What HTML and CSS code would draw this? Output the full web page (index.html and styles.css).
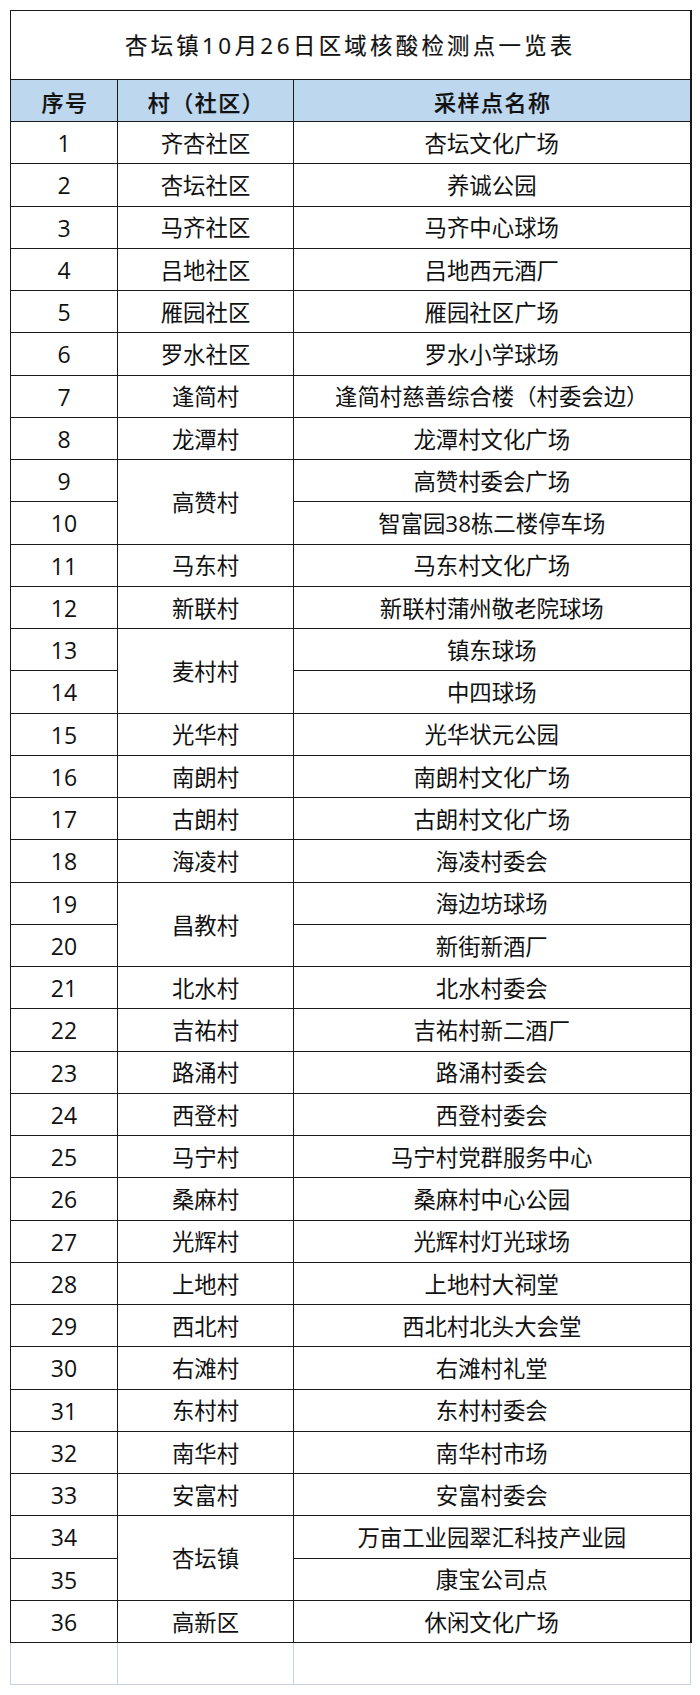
FILE: index.html
```html
<!DOCTYPE html>
<html lang="zh-CN">
<head>
<meta charset="utf-8">
<title>杏坛镇10月26日区域核酸检测点一览表</title>
<link rel="stylesheet" href="styles.css">
</head>
<body>
<div class="sheet">
<table class="list">
  <colgroup>
    <col class="c-no">
    <col class="c-vil">
    <col class="c-site">
  </colgroup>
  <thead>
    <tr class="title-row"><th colspan="3" class="title">杏坛镇<span class="num">10</span>月<span class="num">26</span>日区域核酸检测点一览表</th></tr>
    <tr class="head-row"><th>序号</th><th>村（社区）</th><th class="last">采样点名称</th></tr>
  </thead>
  <tbody>
    <tr><td class="no">1</td><td>齐杏社区</td><td class="last">杏坛文化广场</td></tr>
    <tr><td class="no">2</td><td>杏坛社区</td><td class="last">养诚公园</td></tr>
    <tr><td class="no">3</td><td>马齐社区</td><td class="last">马齐中心球场</td></tr>
    <tr><td class="no">4</td><td>吕地社区</td><td class="last">吕地西元酒厂</td></tr>
    <tr><td class="no">5</td><td>雁园社区</td><td class="last">雁园社区广场</td></tr>
    <tr><td class="no">6</td><td>罗水社区</td><td class="last">罗水小学球场</td></tr>
    <tr><td class="no">7</td><td>逢简村</td><td class="last">逢简村慈善综合楼（村委会边）</td></tr>
    <tr><td class="no">8</td><td>龙潭村</td><td class="last">龙潭村文化广场</td></tr>
    <tr><td class="no">9</td><td rowspan="2">高赞村</td><td class="last">高赞村委会广场</td></tr>
    <tr><td class="no">10</td><td class="last">智富园38栋二楼停车场</td></tr>
    <tr><td class="no">11</td><td>马东村</td><td class="last">马东村文化广场</td></tr>
    <tr><td class="no">12</td><td>新联村</td><td class="last">新联村蒲州敬老院球场</td></tr>
    <tr><td class="no">13</td><td rowspan="2">麦村村</td><td class="last">镇东球场</td></tr>
    <tr><td class="no">14</td><td class="last">中四球场</td></tr>
    <tr><td class="no">15</td><td>光华村</td><td class="last">光华状元公园</td></tr>
    <tr><td class="no">16</td><td>南朗村</td><td class="last">南朗村文化广场</td></tr>
    <tr><td class="no">17</td><td>古朗村</td><td class="last">古朗村文化广场</td></tr>
    <tr><td class="no">18</td><td>海凌村</td><td class="last">海凌村委会</td></tr>
    <tr><td class="no">19</td><td rowspan="2">昌教村</td><td class="last">海边坊球场</td></tr>
    <tr><td class="no">20</td><td class="last">新街新酒厂</td></tr>
    <tr><td class="no">21</td><td>北水村</td><td class="last">北水村委会</td></tr>
    <tr><td class="no">22</td><td>吉祐村</td><td class="last">吉祐村新二酒厂</td></tr>
    <tr><td class="no">23</td><td>路涌村</td><td class="last">路涌村委会</td></tr>
    <tr><td class="no">24</td><td>西登村</td><td class="last">西登村委会</td></tr>
    <tr><td class="no">25</td><td>马宁村</td><td class="last">马宁村党群服务中心</td></tr>
    <tr><td class="no">26</td><td>桑麻村</td><td class="last">桑麻村中心公园</td></tr>
    <tr><td class="no">27</td><td>光辉村</td><td class="last">光辉村灯光球场</td></tr>
    <tr><td class="no">28</td><td>上地村</td><td class="last">上地村大祠堂</td></tr>
    <tr><td class="no">29</td><td>西北村</td><td class="last">西北村北头大会堂</td></tr>
    <tr><td class="no">30</td><td>右滩村</td><td class="last">右滩村礼堂</td></tr>
    <tr><td class="no">31</td><td>东村村</td><td class="last">东村村委会</td></tr>
    <tr><td class="no">32</td><td>南华村</td><td class="last">南华村市场</td></tr>
    <tr><td class="no">33</td><td>安富村</td><td class="last">安富村委会</td></tr>
    <tr><td class="no">34</td><td rowspan="2">杏坛镇</td><td class="last">万亩工业园翠汇科技产业园</td></tr>
    <tr><td class="no">35</td><td class="last">康宝公司点</td></tr>
    <tr><td class="no">36</td><td>高新区</td><td class="last">休闲文化广场</td></tr>
    <tr class="blank-row"><td></td><td></td><td></td></tr>
  </tbody>
</table>
</div>
</body>
</html>
```
FILE: styles.css
```css
html, body {
  margin: 0;
  padding: 0;
  background: #ffffff;
}

.sheet {
  padding: 10px 0 0 10px;
}

.list {
  border-collapse: collapse;
  table-layout: fixed;
  width: 680px;
  font-family: "Open Sans", "Noto Sans CJK SC", sans-serif;
  color: #111111;
}

.c-no { width: 107px; }
.c-vil { width: 176px; }
.c-site { width: 397px; }

.list th,
.list td {
  border: 1px solid #1a1a1a;
  text-align: center;
  vertical-align: middle;
  padding: 3px 0 0 0;
  white-space: nowrap;
  font-size: 22.4px;
  font-weight: normal;
  line-height: 1;
}

.list .last {
  border-right: 2px solid #1a1a1a;
}

.title-row {
  height: 69px;
}

.title {
  font-size: 24px;
  letter-spacing: 3.3px;
  padding: 7px 0 0 3px;
  border-right: 2px solid #1a1a1a !important;
  color: #111111;
  -webkit-text-stroke: 0.2px #111111;
}

.title .num {
  letter-spacing: 3.5px;
}

.head-row {
  height: 42px;
}

.head-row th {
  background: #bdd7ee;
  font-weight: 500;
  letter-spacing: 1.5px;
  padding-left: 2px;
  font-size: 22px;
  -webkit-text-stroke: 0.25px #111111;
}

.list tbody tr {
  height: 42.25px;
}

.list td.no {
  font-size: 23px;
  padding-top: 2px;
}

.list .blank-row {
  height: 42px;
}

.list .blank-row td {
  border: 1px solid #c9d3e6;
  border-top: none;
}
```
